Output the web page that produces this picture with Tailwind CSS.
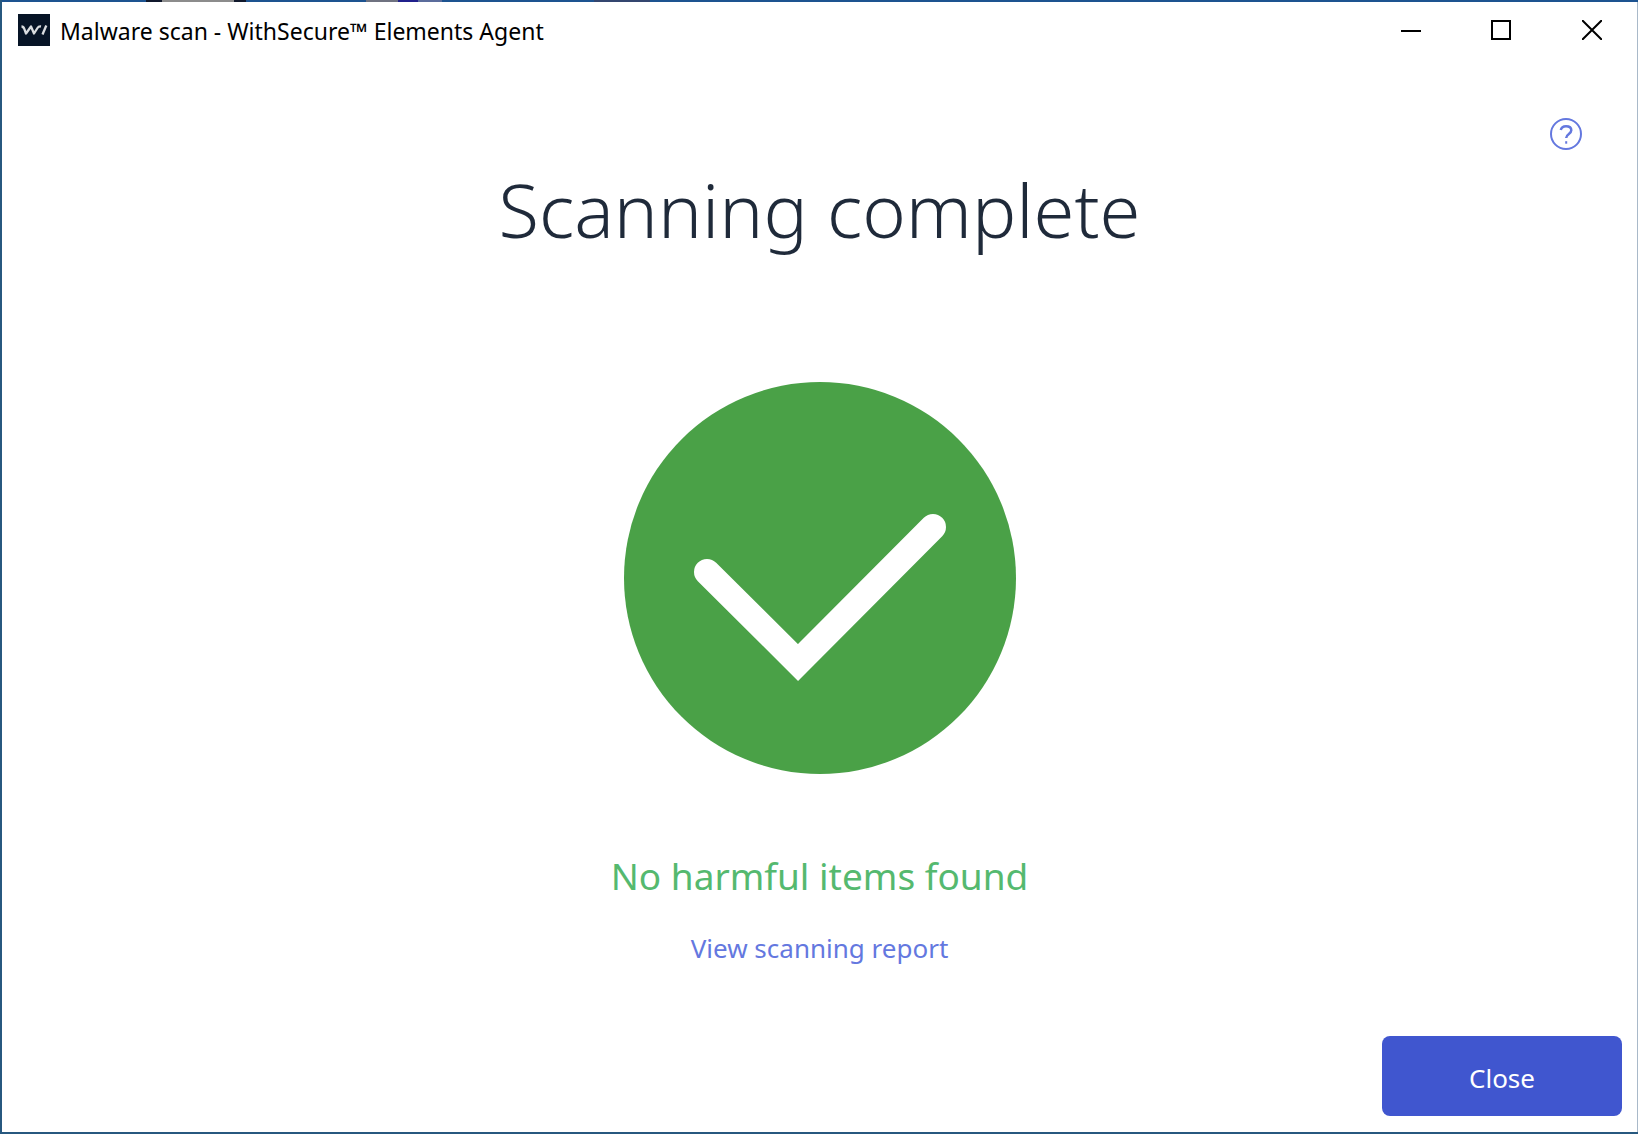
<!DOCTYPE html>
<html lang="en">
<head>
<meta charset="utf-8">
<meta name="viewport" content="width=device-width, initial-scale=1">
<title>Malware scan - WithSecure™ Elements Agent</title>
<script src="https://cdn.jsdelivr.net/npm/@tailwindcss/browser@4"></script>
</head>
<body class="flex min-h-screen flex-col bg-white font-['Noto_Sans','Open_Sans',sans-serif] border-b-2 border-l-2 border-[#27587f]">
  <!-- Desktop edge above the window -->
  <div class="flex h-0.5 bg-[#1d5390]" aria-hidden="true">
    <div class="ml-36 w-4 bg-[#10182c]"></div>
    <div class="w-18 bg-[#8c8c8c]"></div>
    <div class="w-3 bg-[#10182c]"></div>
    <div class="ml-30 w-8 bg-[#6f7280]"></div>
    <div class="w-5 bg-[#20208c]"></div>
    <div class="w-6 bg-[#5b6c9c]"></div>
    <div class="ml-38 w-14 bg-[#34466f]"></div>
  </div>
  <div class="flex grow flex-col border-r border-[#a9b9c9]">
    <header class="flex h-14 items-center justify-between pl-4">
      <div class="flex items-center gap-2.5">
        <svg class="size-8" viewBox="0 0 32 32" aria-hidden="true">
          <rect width="32" height="32" fill="#061426"/>
          <path d="M3.500 12.500c1.800 0 2.200.8 2.800 2.400l1.700 4.600 5-7 3 7 3.500-5.500c.8-1.300 1.700-1.800 3.500-1.500" fill="none" stroke="#d9dcdf" stroke-width="2.300" stroke-linejoin="round"/>
          <path d="M28.300 11.500 24.500 20.500" stroke="#d9dcdf" stroke-width="2.300"/>
        </svg>
        <span class="pt-0.5 text-[23px] leading-8 whitespace-nowrap text-black">Malware scan - WithSecure™ Elements Agent</span>
      </div>
      <div class="flex h-full">
        <button class="flex w-22 items-center justify-center" aria-label="Minimize">
          <svg class="size-5" viewBox="0 0 20 20"><path d="M0 11h20" stroke="#000" stroke-width="2"/></svg>
        </button>
        <button class="flex w-23 items-center justify-center" aria-label="Maximize">
          <svg class="size-5" viewBox="0 0 20 20"><rect x="1" y="1" width="18" height="18" fill="none" stroke="#000" stroke-width="2"/></svg>
        </button>
        <button class="flex w-[90px] items-center justify-center" aria-label="Close window">
          <svg class="size-5" viewBox="0 0 20 20"><path d="M0 0 20 20M20 0 0 20" stroke="#000" stroke-width="2"/></svg>
        </button>
      </div>
    </header>
    <main class="flex grow flex-col items-center">
      <div class="flex w-full justify-end pt-15 pr-[55px]">
        <button class="size-8" aria-label="Help">
          <svg class="size-8" viewBox="0 0 32 32" fill="none" stroke="#6478df" stroke-width="2">
            <circle cx="16" cy="16" r="15"/>
            <path d="M10.800 12c.5-2.300 2.400-3.800 5.200-3.800 3 0 5.300 1.500 5.300 4.100 0 3.700-5.100 3.600-5.100 7.700" stroke-width="2.500"/>
            <path d="M16.200 23.200v2.500"/>
          </svg>
        </button>
      </div>
      <h1 class="mt-2 text-[74px] leading-[104px] font-light whitespace-nowrap text-[#1f2a3a]">Scanning complete</h1>
      <svg class="mt-30 size-98" viewBox="0 0 392 392" role="img" aria-label="Success">
        <circle cx="196" cy="196" r="196" fill="#4aa147"/>
        <path d="M83 190 174 280.500 309 145" fill="none" stroke="#fff" stroke-width="26" stroke-linecap="round" stroke-linejoin="miter"/>
      </svg>
      <p class="mt-[74px] text-[37px] leading-14 whitespace-nowrap text-[#55b96f]">No harmful items found</p>
      <a href="#report" class="mt-6 text-[26px] leading-10 whitespace-nowrap text-[#6478df]">View scanning report</a>
    </main>
    <footer class="flex justify-end pr-[15px] pb-4">
      <button class="h-20 w-60 rounded-lg bg-[#4056cf] pt-1 text-[26px] text-white">Close</button>
    </footer>
  </div>
</body>
</html>
